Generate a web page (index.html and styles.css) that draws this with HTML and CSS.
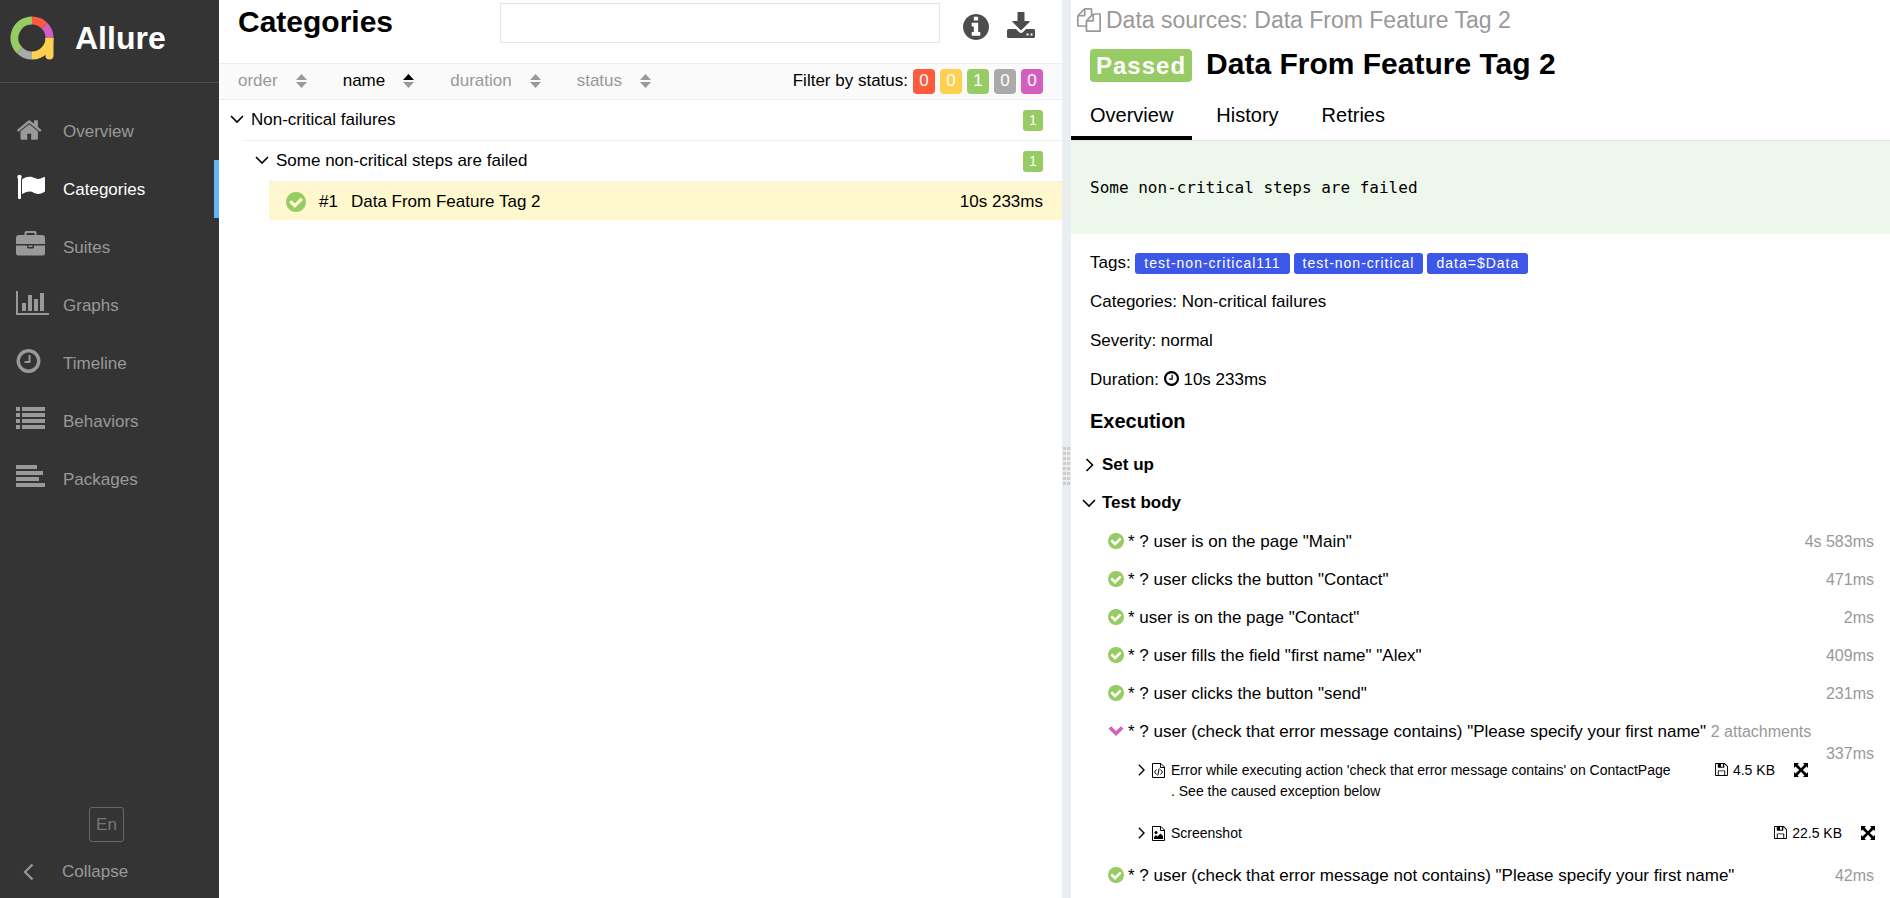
FILE: index.html
```html
<!DOCTYPE html>
<html lang="en">
<head>
<meta charset="utf-8">
<title>Allure Report</title>
<link rel="stylesheet" href="styles.css">
</head>
<body>
<svg class="defs" aria-hidden="true">
  <symbol id="check" viewBox="128 128 1536 1536"><path d="M1412 734q0-28-18-46l-91-90q-19-19-45-19t-45 19l-408 407-226-226q-19-19-45-19t-45 19l-91 90q-18 18-18 46 0 27 18 45l362 362q19 19 45 19 27 0 46-19l543-543q18-18 18-45zm252 162q0 209-103 385.5t-279.5 279.5-385.5 103-385.5-103-279.5-279.5-103-385.5 103-385.5 279.5-279.5 385.5-103 385.5 103 279.5 279.5 103 385.5z"/></symbol>
  <symbol id="clock" viewBox="128 128 1536 1536"><path d="M1024 544v448q0 14-9 23t-23 9h-320q-14 0-23-9t-9-23v-64q0-14 9-23t23-9h224v-352q0-14 9-23t23-9h64q14 0 23 9t9 23zm416 352q0-148-73-273t-198-198-273-73-273 73-198 198-73 273 73 273 198 198 273 73 273-73 198-198 73-273zm224 0q0 209-103 385.5t-279.5 279.5-385.5 103-385.5-103-279.5-279.5-103-385.5 103-385.5 279.5-279.5 385.5-103 385.5 103 279.5 279.5 103 385.5z"/></symbol>
  <symbol id="down" viewBox="0 0 14 14"><path d="M1 4l6 6 6-6" fill="none" stroke="currentColor" stroke-width="1.600"/></symbol>
  <symbol id="right" viewBox="0 0 14 14"><path d="M4.500 1l6 6-6 6" fill="none" stroke="currentColor" stroke-width="1.600"/></symbol>
  <symbol id="sort" viewBox="0 0 11 14"><path class="sort-up" d="M0 6 5.500 0 11 6z"/><path d="M0 8h11l-5.500 6z"/></symbol>
  <symbol id="save" viewBox="0 0 14 14"><path fill-rule="evenodd" d="M0 1Q0 0 1 0h9.500L14 3.500V13q0 1-1 1H1q-1 0-1-1zm1 0v12h2V8.500Q3 8 3.500 8h7q.5 0 .5.500V13h2V4l-3-3v3.500q0 .5-.5.500h-6Q3 5 3 4.500V1zm3 8v4h6V9zm2.500-8v3h2V1z"/></symbol>
  <symbol id="expand" viewBox="0 0 14 14"><path d="M0 0h5L3.600 1.400 7 5.200l3.400-3.800L9 0h5v5l-1.400-1.400L8.900 7l3.700 3.400L14 9v5H9l1.400-1.400L7 8.800l-3.400 3.800L5 14H0V9l1.400 1.400L5.100 7 1.400 3.600 0 5z"/></symbol>
</svg>

<aside class="side">
  <a class="brand" href="#">
    <svg class="logo" width="44" height="44" viewBox="0 0 44 44" stroke-width="8">
      <path d="M9.600 34.400A17.500 17.500 0 0 1 22 4.500" stroke="#97cc64"/>
      <path d="M22 4.500A17.500 17.500 0 0 1 34.400 9.600" stroke="#fd5a3e"/>
      <path d="M34.400 9.600A17.500 17.500 0 0 1 39.500 22" stroke="#d35ebe"/>
      <path d="M22 39.500A17.500 17.500 0 0 1 9.600 34.400" stroke="#aaa"/>
      <path d="M39.500 22A17.500 17.500 0 0 1 22 39.500" stroke="#ffd050"/>
      <path d="M35.500 22h8v17.500a4 4 0 0 1-8 0z" fill="#ffd050" stroke="none"/>
    </svg>
    <span>Allure</span>
  </a>
  <nav class="menu">
    <a href="#"><svg width="34" height="28" viewBox="0 0 34 28"><path transform="translate(-.3 1.500) scale(.01508)" d="M1472 992v480q0 26-19 45t-45 19h-384v-384h-256v384h-384q-26 0-45-19t-19-45v-480q0-1 .5-3t.5-3l575-474 575 474q1 2 1 6zm223-69l-62 74q-8 9-21 11h-3q-13 0-21-7l-692-577-692 577q-12 8-24 7-13-2-21-11l-62-74q-8-10-7-23.500t11-21.500l719-599q32-26 76-26t76 26l244 204v-195q0-14 9-23t23-9h192q14 0 23 9t9 23v408l219 182q10 8 11 21.500t-7 23.500z"/></svg>Overview</a>
    <a href="#" class="active"><svg width="34" height="28" viewBox="0 0 34 28"><circle cx="3.500" cy="4" r="2.200"/><path d="M2 4h3v21q0 1-1 1H3q-1 0-1-1z"/><path d="M6 6.200Q10 3.800 13.500 3.800C17.500 3.800 19 6 22 6q2.500 0 6-2 1-.3 1 .7v13.200q0 .7-.7 1-3.300 2-6.300 2c-3.500 0-5-2.300-8.500-2.300-2.500 0-5 1.200-6.700 2.200Q6 21.100 6 20z"/></svg>Categories</a>
    <a href="#"><svg width="34" height="28" viewBox="0 0 34 28"><path fill-rule="evenodd" d="M8.500 4V1.700Q8.500 0 10.200 0h8.600q1.700 0 1.700 1.700V4H26q3 0 3 3v6H0V7q0-3 3-3zm2 0h8V2h-8zM0 14.500h11V16q0 1.500 1.500 1.500h4Q18 17.500 18 16v-1.500h11V22q0 2.500-2.500 2.500h-24Q0 24.500 0 22zm12.500 0h4V16h-4z"/></svg>Suites</a>
    <a href="#"><svg width="34" height="28" viewBox="0 0 34 28"><path d="M0 2h2v22h31v2H0zM6 14h4v8H6zM12 6h4v16h-4zM18 10h4v12h-4zM24 4h4v18h-4z"/></svg>Graphs</a>
    <a href="#"><svg width="34" height="28" viewBox="0 0 34 28"><use href="#clock" y="2" width="25" height="24"/></svg>Timeline</a>
    <a href="#"><svg width="34" height="28" viewBox="0 0 34 28"><path d="M0 2h4v4H0zM0 8h4v4H0zM0 14h4v4H0zM0 20h4v4H0zM6 2h23v4H6zM6 8h23v4H6zM6 14h23v4H6zM6 20h23v4H6z"/></svg>Behaviors</a>
    <a href="#"><svg width="34" height="28" viewBox="0 0 34 28"><path d="M0 2h21v4H0zM0 8h27v4H0zM0 14h23v4H0zM0 20h29v4H0z"/></svg>Packages</a>
  </nav>
  <div class="side-foot">
    <button class="lang" type="button">En</button>
    <button class="collapse" type="button"><svg width="16" height="18" viewBox="0 0 16 18"><path d="M11.500 1.500 4 9l7.500 7.500" fill="none" stroke="currentColor" stroke-width="2.200"/></svg>Collapse</button>
  </div>
</aside>

<main class="pane list-pane">
  <header class="list-head">
    <h1>Categories</h1>
    <input class="search" type="text" aria-label="Search">
    <button type="button" class="tool" aria-label="Info"><svg width="26" height="26" viewBox="128 128 1536 1536"><path d="M1152 1376v-160q0-14-9-23t-23-9h-96v-512q0-14-9-23t-23-9h-320q-14 0-23 9t-9 23v160q0 14 9 23t23 9h96v320h-96q-14 0-23 9t-9 23v160q0 14 9 23t23 9h448q14 0 23-9t9-23zm-128-896v-160q0-14-9-23t-23-9h-192q-14 0-23 9t-9 23v160q0 14 9 23t23 9h192q14 0 23-9t9-23zm640 416q0 209-103 385.500t-279.500 279.500-385.500 103-385.500-103-279.500-279.500-103-385.500 103-385.500 279.500-279.500 385.500-103 385.500 103 279.500 279.500 103 385.500z"/></svg></button>
    <button type="button" class="tool" aria-label="Download"><svg width="28" height="28" viewBox="0 0 28 28"><path d="M11 0h6q.5 0 .5.500V9h4.700q1 .2.300 1L14 18.500 5.500 10q-.7-.8.300-1h4.700V.5Q10.500 0 11 0z"/><path fill-rule="evenodd" d="M1.500 17H9l3.200 3.200q1.800 1.500 3.600 0L19 17h7.500q1.500 0 1.500 1.500v6q0 1.500-1.500 1.500h-25Q0 26 0 24.500v-6Q0 17 1.500 17zm18 4.500v2h2v-2zm4 0v2h2v-2z"/></svg></button>
  </header>
  <div class="sorter">
    <button type="button">order<svg width="11" height="14"><use href="#sort"/></svg></button>
    <button type="button" class="asc">name<svg width="11" height="14"><use href="#sort"/></svg></button>
    <button type="button">duration<svg width="11" height="14"><use href="#sort"/></svg></button>
    <button type="button">status<svg width="11" height="14"><use href="#sort"/></svg></button>
    <div class="filter"><span>Filter by status:</span>
      <button type="button" class="mark failed">0</button>
      <button type="button" class="mark broken">0</button>
      <button type="button" class="mark passed">1</button>
      <button type="button" class="mark skipped">0</button>
      <button type="button" class="mark unknown">0</button>
    </div>
  </div>
  <div class="tree">
    <div class="node"><svg width="14" height="14"><use href="#down"/></svg><span>Non-critical failures</span><span class="count">1</span></div>
    <div class="branch">
      <div class="node"><svg width="14" height="14"><use href="#down"/></svg><span>Some non-critical steps are failed</span><span class="count">1</span></div>
      <div class="branch">
        <a class="leaf" href="#"><svg class="ok" width="20" height="20"><use href="#check"/></svg><span class="order">#1</span><span>Data From Feature Tag 2</span><span class="time">10s 233ms</span></a>
      </div>
    </div>
  </div>
</main>

<div class="gutter"><svg width="7" height="38"><defs><pattern id="grip" width="4" height="5" patternUnits="userSpaceOnUse"><path d="M0 0h3v3H0z"/></pattern></defs><rect width="7" height="38" fill="url(#grip)"/></svg></div>

<section class="pane detail">
  <div class="source"><svg width="24" height="24" viewBox="0 0 1792 1792"><path d="M1696 384q40 0 68 28t28 68v1216q0 40-28 68t-68 28h-960q-40 0-68-28t-28-68v-288h-544q-40 0-68-28t-28-68v-672q0-40 20-88t48-76l408-408q28-28 76-48t88-20h416q40 0 68 28t28 68v328q68-40 128-40h416zm-544 213l-299 299h299v-299zm-640-384l-299 299h299v-299zm196 647l316-316v-416h-384v416q0 40-28 68t-68 28h-416v640h512v-256q0-40 20-88t48-76zm956 804v-1152h-384v416q0 40-28 68t-68 28h-416v640h896z"/></svg>Data sources: Data From Feature Tag 2</div>
  <h2 class="case-title"><span class="status">Passed</span>Data From Feature Tag 2</h2>
  <nav class="tabs"><a href="#" class="current">Overview</a><a href="#">History</a><a href="#">Retries</a></nav>
  <pre class="message">Some non-critical steps are failed</pre>
  <div class="facts">
    <div>Tags: <span class="tag">test-non-critical111</span><span class="tag">test-non-critical</span><span class="tag">data=$Data</span></div>
    <div>Categories: Non-critical failures</div>
    <div>Severity: normal</div>
    <div>Duration: <svg class="clock" width="15" height="15"><use href="#clock"/></svg> 10s 233ms</div>
  </div>
  <h3>Execution</h3>
  <div class="stage"><svg width="14" height="14"><use href="#right"/></svg>Set up</div>
  <div class="stage"><svg width="14" height="14"><use href="#down"/></svg>Test body</div>
  <ul class="steps">
    <li><div class="step"><svg class="ok" width="16" height="16"><use href="#check"/></svg>* ? user is on the page "Main"<span class="took">4s 583ms</span></div></li>
    <li><div class="step"><svg class="ok" width="16" height="16"><use href="#check"/></svg>* ? user clicks the button "Contact"<span class="took">471ms</span></div></li>
    <li><div class="step"><svg class="ok" width="16" height="16"><use href="#check"/></svg>* user is on the page "Contact"<span class="took">2ms</span></div></li>
    <li><div class="step"><svg class="ok" width="16" height="16"><use href="#check"/></svg>* ? user fills the field "first name" "Alex"<span class="took">409ms</span></div></li>
    <li><div class="step"><svg class="ok" width="16" height="16"><use href="#check"/></svg>* ? user clicks the button "send"<span class="took">231ms</span></div></li>
    <li>
      <div class="step"><svg class="odd" width="16" height="16" viewBox="0 0 16 16"><path d="M1.800 4.500 8 10.500l6.200-6" fill="none" stroke="currentColor" stroke-width="3.600"/></svg>* ? user (check that error message contains) "Please specify your first name" <span class="extra">2 attachments</span><span class="took">337ms</span></div>
      <div class="files">
        <div class="file">
          <svg class="arrow" width="12" height="14"><use href="#right"/></svg>
          <svg class="type" width="13" height="15" viewBox="0 0 13 15"><path d="M.5.5h8.500l3.500 3.500v10.500H.5zM8.500.5v4h4M4.500 6.500 2.500 9l2 2.500M8.500 6.500l2 2.500-2 2.500M7.200 5.500 5.800 12.500" fill="none" stroke="currentColor"/></svg>
          <span class="name">Error while executing action 'check that error message contains' on ContactPage<br>. See the caused exception below</span>
          <a class="size" href="#"><svg width="13" height="13"><use href="#save"/></svg>4.5 KB</a>
          <button type="button" aria-label="Expand"><svg width="14" height="14"><use href="#expand"/></svg></button>
        </div>
        <div class="file">
          <svg class="arrow" width="12" height="14"><use href="#right"/></svg>
          <svg class="type" width="13" height="15" viewBox="0 0 13 15"><path d="M.5.5h8.500l3.500 3.500v10.500H.5zM8.500.5v4h4" fill="none" stroke="currentColor"/><circle cx="4" cy="6.500" r="1.500"/><path d="M2 13v-2l2-2 1.500 1.500L8.500 7.500l2.500 2.500v3z"/></svg>
          <span class="name">Screenshot</span>
          <a class="size" href="#"><svg width="13" height="13"><use href="#save"/></svg>22.5 KB</a>
          <button type="button" aria-label="Expand"><svg width="14" height="14"><use href="#expand"/></svg></button>
        </div>
      </div>
    </li>
    <li><div class="step"><svg class="ok" width="16" height="16"><use href="#check"/></svg>* ? user (check that error message not contains) "Please specify your first name"<span class="took">42ms</span></div></li>
  </ul>
</section>
</body>
</html>
```
FILE: styles.css
```css
* { box-sizing: border-box; }
body {
  margin: 0;
  display: flex;
  height: 100vh;
  overflow: hidden;
  background: #fff;
  color: #000;
  font: 17px/22px "Liberation Sans", Arial, sans-serif;
}
h1, h2, h3, ul, pre { margin: 0; padding: 0; }
button { font: inherit; color: inherit; background: none; border: 0; padding: 0; }
a { color: inherit; text-decoration: none; }
svg { fill: currentColor; flex: none; }
.defs { position: absolute; width: 0; height: 0; }
.ok { color: #97cc64; }
.odd { color: #d35ebe; }

.side {
  flex: none;
  width: 219px;
  display: flex;
  flex-direction: column;
  background: #343434;
  color: #999;
}
.brand {
  display: flex;
  align-items: center;
  gap: 21px;
  height: 83px;
  padding: 0 0 6px 10px;
  border-bottom: 1px solid #4d4d4d;
  color: #fff;
  font-size: 32px;
  font-weight: bold;
}
.logo { fill: none; }
.menu { padding-top: 19px; }
.menu a {
  display: flex;
  align-items: center;
  gap: 13px;
  height: 58px;
  padding: 1px 0 0 16px;
}
.menu svg { margin-bottom: 5px; }
.menu .active { color: #fff; border-right: 5px solid #64b5f6; }
.side-foot { margin-top: auto; display: flex; flex-direction: column; padding-bottom: 15px; }
.lang {
  width: 35px;
  height: 35px;
  margin-left: 89px;
  border: 1px solid #666;
  border-radius: 3px;
  color: #777;
}
.collapse { display: flex; align-items: center; gap: 25px; padding: 19px 0 0 21px; }

.pane { min-width: 0; overflow: hidden; }
.list-pane { flex: 843 1 0; }
.detail { flex: 819 1 0; }
.gutter {
  flex: none;
  width: 9px;
  display: flex;
  align-items: center;
  justify-content: center;
  padding-top: 34px;
  background: #eaeef1;
  color: #ccc;
}

.list-head {
  display: flex;
  align-items: flex-start;
  height: 64px;
  padding: 3px 27px 0 19px;
  border-bottom: 1px solid #eceff1;
}
h1 { flex: 264 1 0; font-size: 30px; line-height: 38px; }
.search { flex: 438 1 0; min-width: 0; height: 40px; border: 1px solid #e5e5e5; background: #fff; }
.tool { color: #4d4d4d; height: 28px; margin: 9px 0 0 18px; }
.search + .tool { margin-left: 23px; padding-top: 2px; }
.tool svg { display: block; }

.sorter {
  display: flex;
  align-items: center;
  gap: 36px;
  height: 36px;
  padding: 0 19px 1px;
  border-bottom: 1px solid #eceff1;
  background: #fafafa;
}
.sorter > button { display: flex; align-items: center; gap: 18px; color: #999; }
.sorter > .asc { color: #000; }
.sorter > .asc svg { color: #999; }
.asc { --up: #000; }
.sort-up { fill: var(--up, currentColor); }
.filter { display: flex; align-items: center; gap: 5px; margin-left: auto; }
.mark { width: 22px; height: 25px; border-radius: 4px; color: #fff; }
.failed { background: #fd5a3e; }
.broken { background: #ffd050; }
.passed { background: #97cc64; }
.skipped { background: #aaa; }
.unknown { background: #d35ebe; }

.node { display: flex; align-items: center; gap: 7px; height: 40px; padding: 0 19px 0 11px; }
.node svg { margin-bottom: 2px; }
.count {
  width: 20px;
  margin-left: auto;
  border-radius: 3px;
  background: #97cc64;
  color: #fff;
  font-size: 14px;
  line-height: 21px;
  text-align: center;
}
.branch { margin-left: 25px; border-top: 1px solid #eceff1; }
.leaf { display: flex; align-items: center; height: 38px; padding: 1px 19px 0 17px; background: #fff8ce; }
.order { margin: 0 13px; }
.time { margin-left: auto; }

.source {
  display: flex;
  align-items: center;
  gap: 5px;
  height: 40px;
  padding-left: 6px;
  color: #999;
  font-size: 23px;
}
.case-title {
  display: flex;
  align-items: center;
  gap: 14px;
  height: 50px;
  padding: 0 0 2px 19px;
  font-size: 30px;
}
.status {
  padding: 0 6px;
  margin-top: 2px;
  border-radius: 4px;
  background: #97cc64;
  color: #fff;
  font-size: 24px;
  line-height: 33px;
  letter-spacing: 1px;
}
.tabs { display: flex; gap: 5px; border-bottom: 1px solid #e5e5e5; font-size: 20px; }
.tabs a { padding: 3px 19px 0; line-height: 44px; height: 50px; border-bottom: 4px solid transparent; }
.tabs .current { border-color: #000; }
.message {
  padding: 37px 19px 36px;
  background: #edf7eb;
  font: 16px/20px "DejaVu Sans Mono", monospace;
}
.facts { display: grid; gap: 17px; padding: 18px 19px 0; }
.tag {
  display: inline-block;
  margin-right: 4px;
  padding: 0 9px;
  border-radius: 3px;
  background: #3d57e6;
  color: #fff;
  font-size: 14px;
  line-height: 21px;
  letter-spacing: 1px;
}
.clock { vertical-align: -1px; }
h3 { padding: 19px 19px 0; font-size: 20px; line-height: 22px; }
.stage { display: flex; align-items: center; gap: 6px; height: 38px; padding-left: 11px; font-weight: bold; }
h3 + .stage { margin-top: 14px; }
.steps { list-style: none; padding-left: 37px; margin-top: 1px; }
.step { padding: 8px 16px 8px 0; }
.step > svg { margin-right: 4px; vertical-align: -2px; }
.extra, .took { color: #999; font-size: 16px; }
.extra { margin-right: 24px; }
.took { float: right; margin-left: 3px; }
.files { padding-bottom: 4px; font-size: 14px; line-height: 21px; }
.file { display: flex; align-items: flex-start; padding: 9px 15px 9px 27px; }
.file + .file { margin-top: 3px; }
.file svg { margin-top: 3px; }
.arrow { margin-right: 5px; }
.type { margin-right: 6px; }
.name { flex: 1; }
.size { display: flex; gap: 5px; margin: 0 19px 0 20px; }
.file button { display: flex; line-height: 21px; }
```
